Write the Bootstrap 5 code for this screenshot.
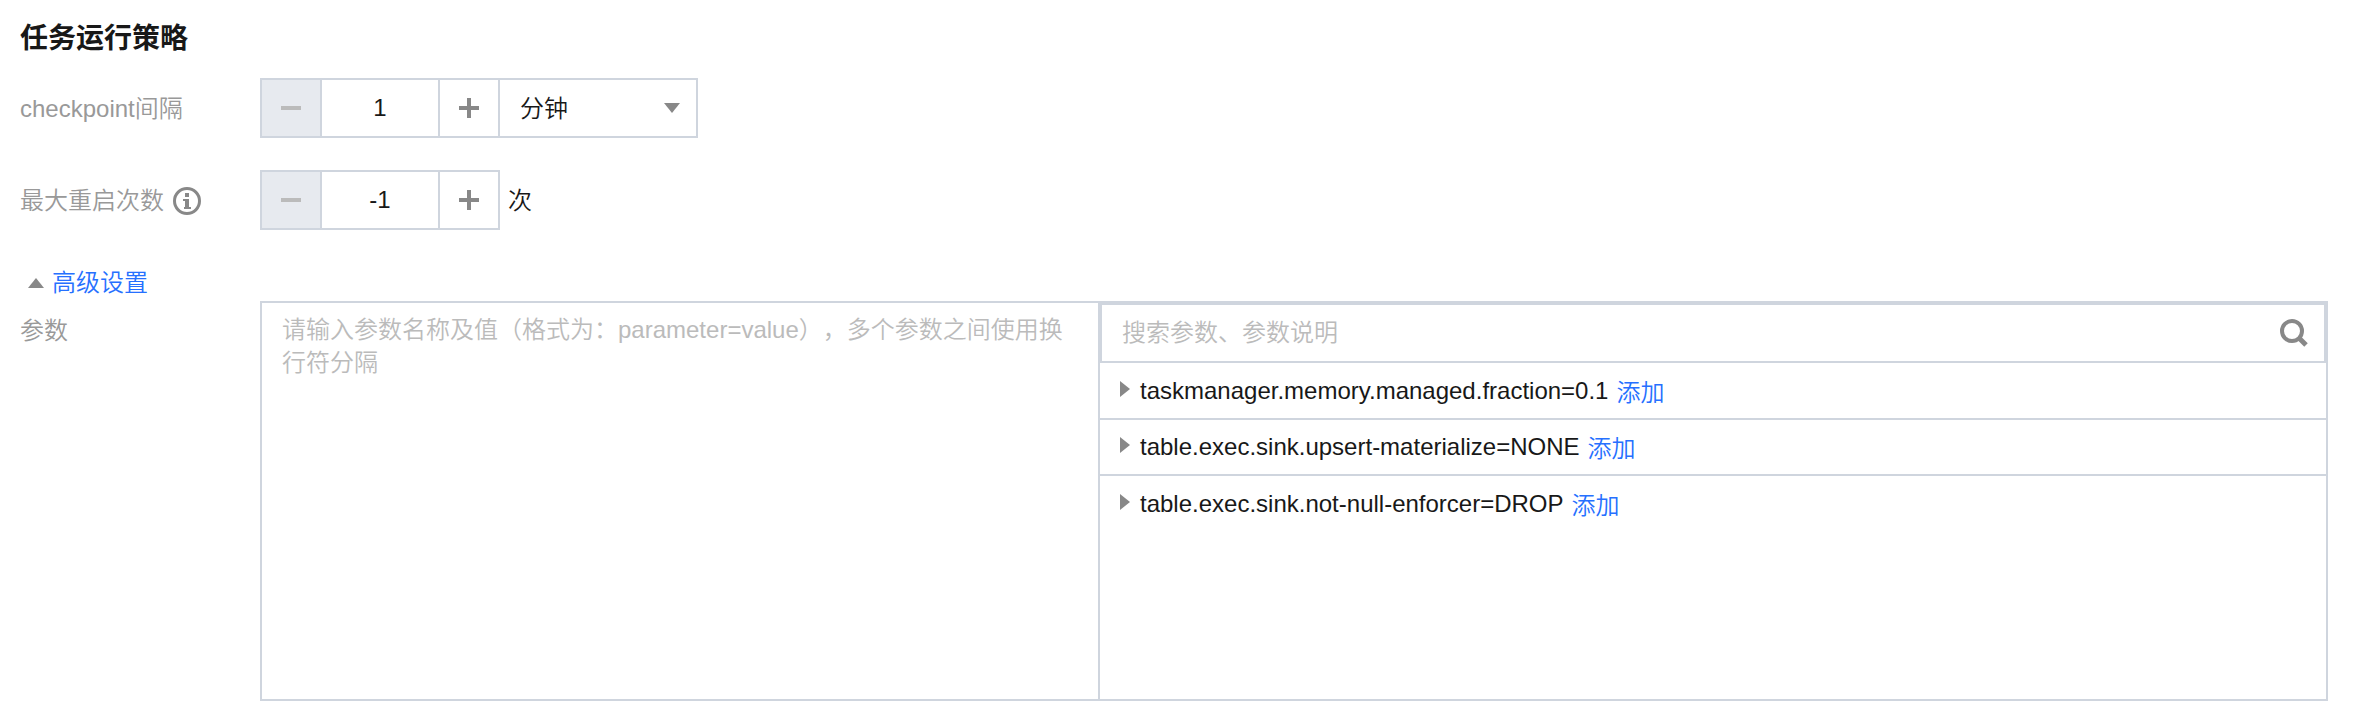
<!DOCTYPE html>
<html lang="zh-CN">
<head>
<meta charset="utf-8">
<meta name="viewport" content="width=device-width, initial-scale=1">
<title>任务运行策略</title>
<link href="https://cdn.jsdelivr.net/npm/bootstrap@5.3.0/dist/css/bootstrap.min.css" rel="stylesheet">
<style>
  :root { --line: #cfd5de; --ink: #181818; --muted: #999; --hint: #bbb; --glyph: #888; --accent: #2670ff; }
  body { font-family: "Liberation Sans", "Noto Sans CJK SC", sans-serif; font-size: 24px; font-weight: 350; line-height: 36px; color: var(--ink); background: #fff; }
  .policy-form { padding: 18px 28px 16px 20px; }
  .policy-title { font-size: 28px; line-height: 42px; font-weight: 700; margin-bottom: 18px; }
  .field-row { margin-bottom: 32px; }
  .field-name { width: 240px; color: var(--muted); }
  .field-name, .unit-text { padding-top: 2px; }
  .accent-link { color: var(--accent); text-decoration: none; }
  .step-btn, .step-value, .unit-select { height: 60px; border: 2px solid var(--line); border-radius: 0; background-color: #fff; color: var(--ink); font-size: 24px; font-weight: 350; }
  .step-btn { width: 62px; padding: 0; color: var(--glyph); }
  .step-btn:disabled { background-color: #e7eaef; color: var(--hint); }
  .step-value { width: 120px; margin: 0 -2px; padding: 0; text-align: center; }
  .unit-select { width: 200px; margin-left: -2px; padding: 2px 40px 0 20px; background-position: right 16px center; background-size: 16px 10px;
    background-image: url("data:image/svg+xml,%3csvg xmlns='http://www.w3.org/2000/svg' viewBox='0 0 16 10'%3e%3cpath fill='%23888' d='M0 0h16L8 10z'/%3e%3c/svg%3e"); }
  .toggle-row { padding-left: 8px; margin-top: 35px; }
  .param-box { height: 400px; border: 2px solid var(--line); }
  .param-input { width: 838px; padding: 10px 20px; border: 0; border-right: 2px solid var(--line); border-radius: 0; resize: none; line-height: 33px; font-size: 24px; font-weight: 350; color: var(--ink); text-spacing-trim: space-all; font-feature-settings: "chws" 0, "halt" 0, "kern" 0; }
  .search-line { height: 60px; border: 2px solid var(--line); padding: 0 16px 0 20px; }
  .search-input { font-size: 24px; font-weight: 350; height: 56px; color: var(--ink); }
  .param-input::placeholder, .search-input::placeholder { color: var(--hint); opacity: 1; }
  .param-item { height: 56px; padding-left: 20px; border-bottom: 2px solid var(--line); }
  .param-item:first-child { height: 57px; }
  .param-item:last-child { border-bottom: 0; }
  .param-item .accent-link { padding-top: 4px; }
  .expand-btn { width: 20px; margin-bottom: 4px; }
  svg { display: block; fill: currentColor; }
  .glyph { color: var(--glyph); }
</style>
</head>
<body>
<main class="policy-form">
  <h1 class="policy-title">任务运行策略</h1>

  <div class="field-row d-flex align-items-center">
    <label class="field-name flex-shrink-0" for="interval">checkpoint间隔</label>
    <div class="d-flex">
      <button class="step-btn d-flex align-items-center justify-content-center" type="button" disabled aria-label="减少">
        <svg width="20" height="20" viewBox="0 0 20 20"><path d="M0 8h20v4H0z"/></svg>
      </button>
      <input class="step-value" id="interval" type="text" value="1">
      <button class="step-btn d-flex align-items-center justify-content-center" type="button" aria-label="增加">
        <svg width="20" height="20" viewBox="0 0 20 20"><path d="M8 0h4v8h8v4h-8v8H8v-8H0V8h8z"/></svg>
      </button>
      <select class="unit-select form-select" aria-label="单位"><option>分钟</option></select>
    </div>
  </div>

  <div class="field-row d-flex align-items-center">
    <div class="field-name flex-shrink-0 d-flex align-items-center">
      <label for="restarts">最大重启次数</label>
      <svg class="glyph ms-2" width="30" height="28" viewBox="-1 0 30 28"><circle cx="14" cy="14" r="12.5" fill="none" stroke="currentColor" stroke-width="3"/><path d="M12 6h4v4h-4zM10 12h6v8h2v2h-7v-2h1v-6h-2z"/></svg>
    </div>
    <div class="d-flex align-items-center">
      <button class="step-btn d-flex align-items-center justify-content-center" type="button" disabled aria-label="减少">
        <svg width="20" height="20" viewBox="0 0 20 20"><path d="M0 8h20v4H0z"/></svg>
      </button>
      <input class="step-value" id="restarts" type="text" value="-1">
      <button class="step-btn d-flex align-items-center justify-content-center" type="button" aria-label="增加">
        <svg width="20" height="20" viewBox="0 0 20 20"><path d="M8 0h4v8h8v4h-8v8H8v-8H0V8h8z"/></svg>
      </button>
      <span class="unit-text ms-2 ps-0">次</span>
    </div>
  </div>

  <div class="toggle-row d-flex align-items-center gap-2">
    <svg class="glyph" width="16" height="10" viewBox="0 0 16 10"><path d="M0 10h16L8 0z"/></svg>
    <a class="accent-link" href="#advanced">高级设置</a>
  </div>

  <div class="d-flex" id="advanced">
    <label class="field-name flex-shrink-0 pt-2 mt-1" for="params">参数</label>
    <div class="param-box d-flex flex-grow-1">
      <textarea class="param-input flex-shrink-0" id="params" placeholder="请输入参数名称及值（格式为：parameter=value），多个参数之间使用换行符分隔"></textarea>
      <div class="flex-grow-1">
        <div class="search-line d-flex align-items-center">
          <input class="search-input flex-grow-1 border-0 p-0" type="text" placeholder="搜索参数、参数说明" aria-label="搜索参数">
          <button class="btn p-0 border-0 glyph" type="button" aria-label="搜索">
            <svg width="28" height="28" viewBox="0 0 28 28"><circle cx="12" cy="12" r="10" fill="none" stroke="currentColor" stroke-width="4"/><path d="M19 19l7 7" stroke="currentColor" stroke-width="5"/></svg>
          </button>
        </div>
        <ul class="list-unstyled mb-0">
          <li class="param-item d-flex align-items-center">
            <button class="expand-btn btn p-0 border-0 glyph" type="button" aria-label="展开"><svg width="10" height="16" viewBox="0 0 10 16"><path d="M0 0v16l10-8z"/></svg></button>
            <span>taskmanager.memory.managed.fraction=0.1</span><a class="accent-link ms-2" href="#add">添加</a>
          </li>
          <li class="param-item d-flex align-items-center">
            <button class="expand-btn btn p-0 border-0 glyph" type="button" aria-label="展开"><svg width="10" height="16" viewBox="0 0 10 16"><path d="M0 0v16l10-8z"/></svg></button>
            <span>table.exec.sink.upsert-materialize=NONE</span><a class="accent-link ms-2" href="#add">添加</a>
          </li>
          <li class="param-item d-flex align-items-center">
            <button class="expand-btn btn p-0 border-0 glyph" type="button" aria-label="展开"><svg width="10" height="16" viewBox="0 0 10 16"><path d="M0 0v16l10-8z"/></svg></button>
            <span>table.exec.sink.not-null-enforcer=DROP</span><a class="accent-link ms-2" href="#add">添加</a>
          </li>
        </ul>
      </div>
    </div>
  </div>
</main>
<script src="https://cdn.jsdelivr.net/npm/bootstrap@5.3.0/dist/js/bootstrap.bundle.min.js"></script>
</body>
</html>
